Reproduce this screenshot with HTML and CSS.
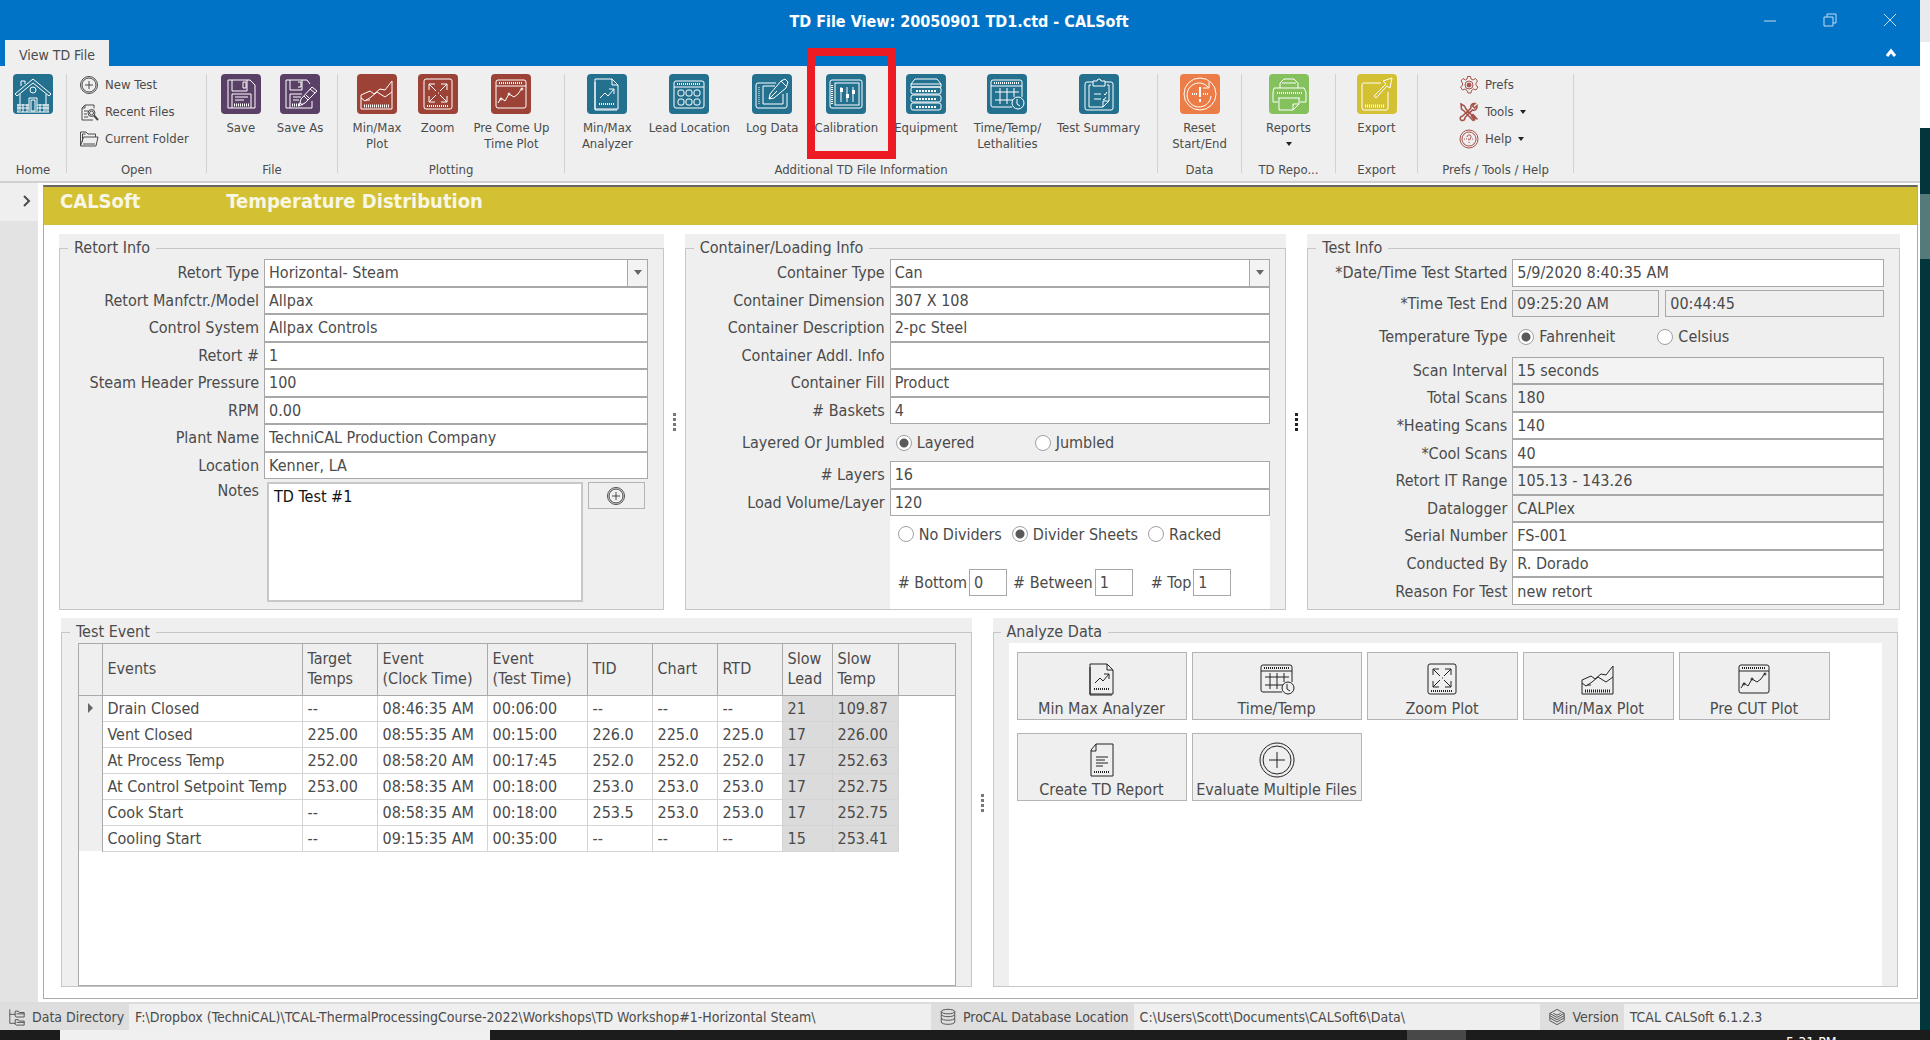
FILE: index.html
```html
<!doctype html>
<html lang="en">
  <head>
    <meta charset="utf-8">
    <meta name="viewport" content="width=device-width, initial-scale=1">
    <title>TD File View: 20050901 TD1.ctd - CALSoft</title>
    <link rel="stylesheet" href="styles.css">
  </head>
  <body>
    <!-- icon sprite, 40x40 grid -->
    <svg class="sprite" aria-hidden="true">
      <symbol id="i-home" viewBox="0 0 40 40"><path d="M2 20L20 5l18 15-2 2L20 9 4 22zM8 12V7h4v3M7 20v17M33 20v17M16 37V24h8v13M18 26h4v11h-4z"/><circle cx="20" cy="16" r="3"/><path d="M4 31h12M24 31h12M4 34h12M24 34h12M4 38h32M5 30v8M10 30v8M14 30v8M27 30v8M31 30v8M35 30v8"/></symbol>
      <symbol id="i-save" viewBox="0 0 40 40"><path d="M7 6h22l5 5v23H7zM11 6v11h15V6M22 8h3v6h-3zM11 34V20h19v14M14 23h13M14 26h9"/><path stroke-dasharray="1 1" stroke-width="3" d="M13 31h15"/></symbol>
      <symbol id="i-saveas" viewBox="0 0 40 40"><path d="M27 6H6v28h26V27M27 6l3 4M10 6v10h12V6M18 8h3v5h-3M10 34V20h12M13 23h8M13 26h6M32 13l5 4-12 12-6 3 2-7zM30 15l5 4M24 22l4 4M26 21l3 3M20 29l3 2"/><path stroke-dasharray="1 1" stroke-width="3" d="M12 31h8"/></symbol>
      <symbol id="i-area" viewBox="0 0 40 40"><path d="M4 21v14h31V7l-7 9-5-1-6 5-4-3zM4 24l4 3 6-4 6-5 8 5 7-5M9 26h4"/><path stroke-dasharray="1 1" stroke-width="3" d="M7 32h26"/></symbol>
      <symbol id="i-zoom" viewBox="0 0 40 40"><rect x="6" y="5" width="28" height="30" rx="2"/><path d="M11 16v-6h6M11 10l7 7M23 10h6v6M29 10l-7 7M11 22v6h6M11 28l7-7M29 22v6h-6M29 28l-7-7M20 19h1"/><path stroke-dasharray="1 1" stroke-width="2" d="M9 32h22"/></symbol>
      <symbol id="i-line" viewBox="0 0 40 40"><rect x="5" y="6" width="30" height="28" rx="2"/><path d="M5 12h30M7 29l3-5 4 3 4-7 5 3 4-3 4-6"/><circle cx="10" cy="25" r="1"/><circle cx="18" cy="20" r="1"/><circle cx="31" cy="15" r="1"/><path stroke-dasharray="1 1" stroke-width="2" d="M8 9h24"/></symbol>
      <symbol id="i-analyzer" viewBox="0 0 40 40"><path d="M10 5h15l6 6v24H8V5zM25 5v6h6M8 8v28h22M13 24l5-5 3 3 6-7M22 15h5v5"/><path stroke-dasharray="1 1" stroke-width="2" d="M12 30h16"/></symbol>
      <symbol id="i-grid" viewBox="0 0 40 40"><rect x="5" y="7" width="30" height="27" rx="2"/><path d="M5 13h30"/><path stroke-dasharray="1 1" stroke-width="2" d="M8 10h24"/><rect x="9" y="16" width="6" height="6" rx="2"/><rect x="17" y="16" width="6" height="6" rx="2"/><rect x="25" y="16" width="6" height="6" rx="2"/><rect x="9" y="25" width="6" height="6" rx="2"/><rect x="17" y="25" width="6" height="6" rx="2"/><rect x="25" y="25" width="6" height="6" rx="2"/></symbol>
      <symbol id="i-log" viewBox="0 0 40 40"><path d="M24 9H6a2 2 0 0 0-2 2v21a2 2 0 0 0 2 2h27a2 2 0 0 0 2-2V19M23 12H11v18h20V20M33 5l3 3-2 6-12 10-5 1 1-5 11-13zM29 7l5 5M17 25l8-8"/><path stroke-dasharray="1 1" d="M7 13v17"/></symbol>
      <symbol id="i-sliders" viewBox="0 0 40 40"><rect x="4" y="6" width="32" height="28" rx="2"/><rect x="9" y="9" width="24" height="22"/><path d="M15 13v15M21 13v15M27 13v15"/><path stroke-width="4" d="M14 16h3M20 22h3M26 18h3"/><path stroke-dasharray="1 1" stroke-width="2" d="M6 11v19"/></symbol>
      <symbol id="i-equip" viewBox="0 0 40 40"><path d="M9 5h22l4 5v3H5v-3zM5 10h30"/><rect x="5" y="13" width="30" height="7" rx="2"/><rect x="5" y="21" width="30" height="7" rx="2"/><rect x="5" y="29" width="30" height="7" rx="2"/><path stroke-dasharray="2 1" stroke-width="2" d="M10 17h21M10 25h21M10 33h21"/></symbol>
      <symbol id="i-time" viewBox="0 0 40 40"><path d="M35 23V8a2 2 0 0 0-2-2H6a2 2 0 0 0-2 2v23a2 2 0 0 0 2 2h19M4 12h31M8 18h24M8 26h18M13 14v16M20 14v16M27 14v9"/><circle cx="31" cy="29" r="6"/><path d="M30 25v5l3 2"/><path stroke-dasharray="1 1" stroke-width="2" d="M7 9h25"/></symbol>
      <symbol id="i-clip" viewBox="0 0 40 40"><path d="M14 8H8a2 2 0 0 0-2 2v24a2 2 0 0 0 2 2h24a2 2 0 0 0 2-2V10a2 2 0 0 0-2-2h-6M14 7h4a2 2 0 0 1 4 0h4v5H14zM12 11H10v22h14l6-6V11h-2M24 33v-6h6M15 20h7M15 25h7M25 20l1 1 2-3M24 25l1 1 2-3"/></symbol>
      <symbol id="i-reset" viewBox="0 0 40 40"><circle cx="20" cy="20" r="16"/><path d="M28 13a12 12 0 1 0 3 9M29 8v6h-6"/><path stroke-width="2" d="M20 13v10M20 25v3"/><path stroke-dasharray="1 1" stroke-width="2" d="M12 20h6M23 20h6"/></symbol>
      <symbol id="i-print" viewBox="0 0 40 40"><path d="M11 14V9l4-4h10l4 4v5M5 14h30l2 4v10h-6M9 28H4V18l1-4M9 24h22M10 24v12h14l6-6v-6M24 36v-6h6M13 9h14"/><path stroke-dasharray="1 1" stroke-width="2" d="M8 19h25"/></symbol>
      <symbol id="i-export" viewBox="0 0 40 40"><path d="M24 9H7a2 2 0 0 0-2 2v23a2 2 0 0 0 2 2h22a2 2 0 0 0 2-2V18M17 22L29 10l-3-3 9-3-2 10-3-2-11 12z"/><path stroke-dasharray="1 1" stroke-width="3" d="M8 32h20"/></symbol>
      <symbol id="i-plus" viewBox="0 0 40 40"><circle cx="20" cy="20" r="17"/><circle cx="20" cy="20" r="14"/><path d="M20 12v16M12 20h16"/></symbol>
      <symbol id="i-report" viewBox="0 0 40 40"><path d="M14 4h17v32H9V10zM14 4v7H9M14 17h12M14 20h9M14 23h12M14 26h7"/><path stroke-dasharray="1 1" stroke-width="2" d="M12 32h16"/></symbol>
      <symbol id="i-recent" viewBox="0 0 40 40"><path d="M12 6h18v7M12 6v6H6v24h22M6 12l6-6M10 18h8M10 24h6M10 30h8"/><circle cx="25" cy="22" r="7"/><circle cx="25" cy="22" r="4"/><path stroke-width="4" d="M30 27l8 9"/></symbol>
      <symbol id="i-folder" viewBox="0 0 40 40"><path d="M3 34V6h11l4 4h15v6M3 34l6-18h29l-4 18zM7 26V10h6M8 30h24"/></symbol>
      <symbol id="i-gear" viewBox="0 0 40 40"><path d="M17 3h6l1 5 4 2 5-3 4 5-3 4v5l4 3-4 6-5-2-4 3-1 5h-6l-2-5-4-3-5 2-4-6 4-3v-5l-3-4 4-5 5 3 3-2z"/><circle cx="20" cy="20" r="8"/><circle cx="20" cy="20" r="4" fill="currentColor"/></symbol>
      <symbol id="i-tools" viewBox="0 0 40 40"><path stroke-width="3" d="M4 4l7 4 3 6 18 19-4 4L10 18l-5-4zM36 7l-5 5-4-4 5-5c-6-1-10 4-8 9L7 28c-6 1-6 9 0 9 4 0 5-4 5-6l15-15c5 2 10-2 9-9zM27 24l10 11M24 27l8 10"/></symbol>
      <symbol id="i-help" viewBox="0 0 40 40"><circle cx="20" cy="20" r="18"/><circle cx="20" cy="20" r="14"/><path d="M16 16c0-6 9-5 8 0 0 3-4 3-4 7M20 26v2"/><path stroke-dasharray="2 2" d="M10 20h20"/></symbol>
      <symbol id="i-tree" viewBox="0 0 40 40"><path d="M4 3v31h12M4 14h12M16 7h7l2 3h11v10H18l-2-2zM16 26h7l2 3h11v9H18l-2-2zM19 13h17M19 32h17"/></symbol>
      <symbol id="i-db" viewBox="0 0 40 40"><ellipse cx="20" cy="8" rx="15" ry="5"/><path d="M5 8v6c0 7 30 7 30 0V8M5 15v7c0 7 30 7 30 0v-7M5 23v8c0 7 30 7 30 0v-8"/></symbol>
      <symbol id="i-layers" viewBox="0 0 40 40"><path d="M20 3l16 9v16l-16 9-16-9V12zM4 12l16 9 16-9M4 17l16 9 16-9M4 22l16 9 16-9M12 12l8 4 8-4"/></symbol>
    </svg>

    <div class="desktop">
      <div class="window">
        <header class="titlebar">
          <h1>TD File View: 20050901 TD1.ctd - CALSoft</h1>
          <div class="window-buttons">
            <button aria-label="Minimize"><svg viewBox="0 0 14 14"><path d="M1 8h12"/></svg></button>
            <button aria-label="Restore"><svg viewBox="0 0 14 14"><path d="M1 4h9v9H1zM4 4V1h9v9h-3"/></svg></button>
            <button aria-label="Close"><svg viewBox="0 0 14 14"><path d="M1 1l12 12M13 1L1 13"/></svg></button>
          </div>
        </header>
        <div class="tabs">
          <button class="tab">View TD File</button>
          <button class="collapse" aria-label="Collapse ribbon"><svg viewBox="0 0 14 14"><path d="M3 10l4-5 4 5"/></svg></button>
        </div>

        <nav class="ribbon">
          <section class="rgroup rgroup-home">
            <div class="ritems"><button class="big blue" aria-label="Home"><svg><use href="#i-home"/></svg></button></div>
            <h2>Home</h2>
          </section>
          <section class="rgroup rgroup-open">
            <div class="rlist">
              <button><svg><use href="#i-plus"/></svg>New Test</button>
              <button><svg><use href="#i-recent"/></svg>Recent Files</button>
              <button><svg><use href="#i-folder"/></svg>Current Folder</button>
            </div>
            <h2>Open</h2>
          </section>
          <section class="rgroup rgroup-file">
            <div class="ritems">
              <button class="big purple"><svg><use href="#i-save"/></svg>Save</button>
              <button class="big purple"><svg><use href="#i-saveas"/></svg>Save As</button>
            </div>
            <h2>File</h2>
          </section>
          <section class="rgroup rgroup-plot">
            <div class="ritems">
              <button class="big red"><svg><use href="#i-area"/></svg>Min/Max<br>Plot</button>
              <button class="big red"><svg><use href="#i-zoom"/></svg>Zoom</button>
              <button class="big red"><svg><use href="#i-line"/></svg>Pre Come Up<br>Time Plot</button>
            </div>
            <h2>Plotting</h2>
          </section>
          <section class="rgroup rgroup-info">
            <div class="ritems">
              <button class="big blue"><svg><use href="#i-analyzer"/></svg>Min/Max<br>Analyzer</button>
              <button class="big blue"><svg><use href="#i-grid"/></svg>Lead Location</button>
              <button class="big blue"><svg><use href="#i-log"/></svg>Log Data</button>
              <button class="big blue highlighted"><svg><use href="#i-sliders"/></svg>Calibration</button>
              <button class="big blue"><svg><use href="#i-equip"/></svg>Equipment</button>
              <button class="big blue"><svg><use href="#i-time"/></svg>Time/Temp/<br>Lethalities</button>
              <button class="big blue"><svg><use href="#i-clip"/></svg>Test Summary</button>
            </div>
            <h2>Additional TD File Information</h2>
          </section>
          <section class="rgroup rgroup-data">
            <div class="ritems"><button class="big orange"><svg><use href="#i-reset"/></svg>Reset<br>Start/End</button></div>
            <h2>Data</h2>
          </section>
          <section class="rgroup rgroup-reports">
            <div class="ritems"><button class="big green"><svg><use href="#i-print"/></svg>Reports<i class="caret"></i></button></div>
            <h2>TD Repo...</h2>
          </section>
          <section class="rgroup rgroup-export">
            <div class="ritems"><button class="big yellow"><svg><use href="#i-export"/></svg>Export</button></div>
            <h2>Export</h2>
          </section>
          <section class="rgroup rgroup-prefs">
            <div class="rlist maroon">
              <button><svg><use href="#i-gear"/></svg>Prefs</button>
              <button><svg><use href="#i-tools"/></svg>Tools<i class="caret"></i></button>
              <button><svg><use href="#i-help"/></svg>Help<i class="caret"></i></button>
            </div>
            <h2>Prefs / Tools / Help</h2>
          </section>
        </nav>

        <div class="workspace">
          <aside class="sidebar">
            <button aria-label="Expand panel"><svg viewBox="0 0 14 14"><path d="M4 2l5 5-5 5"/></svg></button>
          </aside>
          <main class="page">
            <div class="banner"><span>CALSoft</span><span>Temperature Distribution</span></div>
            <div class="panels">
              <div class="panel-row">
                <div class="group retort">
                  <fieldset>
                    <legend>Retort Info</legend>
                    <div class="row"><label for="retort-type">Retort Type</label><span class="select"><select id="retort-type"><option>Horizontal- Steam</option></select></span></div>
                    <div class="row"><label for="retort-model">Retort Manfctr./Model</label><input id="retort-model" value="Allpax"></div>
                    <div class="row"><label for="control-system">Control System</label><input id="control-system" value="Allpax Controls"></div>
                    <div class="row"><label for="retort-no">Retort #</label><input id="retort-no" value="1"></div>
                    <div class="row"><label for="pressure">Steam Header Pressure</label><input id="pressure" value="100"></div>
                    <div class="row"><label for="rpm">RPM</label><input id="rpm" value="0.00"></div>
                    <div class="row"><label for="plant">Plant Name</label><input id="plant" value="TechniCAL Production Company"></div>
                    <div class="row"><label for="location">Location</label><input id="location" value="Kenner, LA"></div>
                    <div class="row notes"><label for="notes">Notes</label><textarea id="notes">TD Test #1</textarea><button aria-label="Add note"><svg><use href="#i-plus"/></svg></button></div>
                  </fieldset>
                </div>
                <div class="splitter"></div>
                <div class="group container">
                  <fieldset>
                    <legend>Container/Loading Info</legend>
                    <div class="row"><label for="ctype">Container Type</label><span class="select"><select id="ctype"><option>Can</option></select></span></div>
                    <div class="row"><label for="cdim">Container Dimension</label><input id="cdim" value="307 X 108"></div>
                    <div class="row"><label for="cdesc">Container Description</label><input id="cdesc" value="2-pc Steel"></div>
                    <div class="row"><label for="cinfo">Container Addl. Info</label><input id="cinfo" value=""></div>
                    <div class="row"><label for="cfill">Container Fill</label><input id="cfill" value="Product"></div>
                    <div class="row"><label for="baskets"># Baskets</label><input id="baskets" value="4"></div>
                    <div class="row radios">
                      <span class="label">Layered Or Jumbled</span>
                      <label class="first"><input type="radio" name="layering" checked>Layered</label>
                      <label><input type="radio" name="layering">Jumbled</label>
                    </div>
                    <div class="row"><label for="layers"># Layers</label><input id="layers" value="16"></div>
                    <div class="row"><label for="volume">Load Volume/Layer</label><input id="volume" value="120"></div>
                    <div class="dividers">
                      <div class="divider-types">
                        <label><input type="radio" name="dividers">No Dividers</label>
                        <label><input type="radio" name="dividers" checked>Divider Sheets</label>
                        <label><input type="radio" name="dividers">Racked</label>
                      </div>
                      <div class="divider-counts">
                        <label for="bottom"># Bottom</label><input id="bottom" value="0">
                        <label for="between"># Between</label><input id="between" value="1">
                        <label for="top" class="top"># Top</label><input id="top" value="1">
                      </div>
                    </div>
                  </fieldset>
                </div>
                <div class="splitter dark"></div>
                <div class="group test">
                  <fieldset>
                    <legend>Test Info</legend>
                    <div class="row"><label for="started">*Date/Time Test Started</label><input id="started" value="5/9/2020 8:40:35 AM"></div>
                    <div class="row test-end"><label for="ended">*Time Test End</label><input id="ended" value="09:25:20 AM" readonly><input aria-label="Duration" value="00:44:45" readonly></div>
                    <div class="row radios">
                      <span class="label">Temperature Type</span>
                      <label class="first"><input type="radio" name="temp" checked>Fahrenheit</label>
                      <label><input type="radio" name="temp">Celsius</label>
                    </div>
                    <div class="row"><label for="interval">Scan Interval</label><input id="interval" value="15 seconds" readonly></div>
                    <div class="row"><label for="scans">Total Scans</label><input id="scans" value="180" readonly></div>
                    <div class="row"><label for="heating">*Heating Scans</label><input id="heating" value="140"></div>
                    <div class="row"><label for="cool">*Cool Scans</label><input id="cool" value="40"></div>
                    <div class="row"><label for="range">Retort IT Range</label><input id="range" value="105.13 - 143.26" readonly></div>
                    <div class="row"><label for="logger">Datalogger</label><input id="logger" value="CALPlex" readonly></div>
                    <div class="row"><label for="serial">Serial Number</label><input id="serial" value="FS-001"></div>
                    <div class="row"><label for="by">Conducted By</label><input id="by" value="R. Dorado"></div>
                    <div class="row"><label for="reason">Reason For Test</label><input id="reason" value="new retort"></div>
                  </fieldset>
                </div>
              </div>

              <div class="panel-row lower">
                <div class="group events">
                  <fieldset>
                    <legend>Test Event</legend>
                    <div class="grid-box">
                      <table>
                        <colgroup><col class="c-mark"><col class="c-event"><col class="c-target"><col class="c-clock"><col class="c-test"><col class="c-val"><col class="c-val"><col class="c-val"><col class="c-lead"><col class="c-temp"><col></colgroup>
                        <thead>
                          <tr><th></th><th>Events</th><th>Target<br>Temps</th><th>Event<br>(Clock Time)</th><th>Event<br>(Test Time)</th><th>TID</th><th>Chart</th><th>RTD</th><th>Slow<br>Lead</th><th>Slow<br>Temp</th><th></th></tr>
                        </thead>
                        <tbody>
                          <tr class="current"><td></td><td>Drain Closed</td><td>--</td><td>08:46:35 AM</td><td>00:06:00</td><td>--</td><td>--</td><td>--</td><td>21</td><td>109.87</td><td></td></tr>
                          <tr><td></td><td>Vent Closed</td><td>225.00</td><td>08:55:35 AM</td><td>00:15:00</td><td>226.0</td><td>225.0</td><td>225.0</td><td>17</td><td>226.00</td><td></td></tr>
                          <tr><td></td><td>At Process Temp</td><td>252.00</td><td>08:58:20 AM</td><td>00:17:45</td><td>252.0</td><td>252.0</td><td>252.0</td><td>17</td><td>252.63</td><td></td></tr>
                          <tr><td></td><td>At Control Setpoint Temp</td><td>253.00</td><td>08:58:35 AM</td><td>00:18:00</td><td>253.0</td><td>253.0</td><td>253.0</td><td>17</td><td>252.75</td><td></td></tr>
                          <tr><td></td><td>Cook Start</td><td>--</td><td>08:58:35 AM</td><td>00:18:00</td><td>253.5</td><td>253.0</td><td>253.0</td><td>17</td><td>252.75</td><td></td></tr>
                          <tr><td></td><td>Cooling Start</td><td>--</td><td>09:15:35 AM</td><td>00:35:00</td><td>--</td><td>--</td><td>--</td><td>15</td><td>253.41</td><td></td></tr>
                        </tbody>
                      </table>
                    </div>
                  </fieldset>
                </div>
                <div class="splitter"></div>
                <div class="group analyze">
                  <fieldset>
                    <legend>Analyze Data</legend>
                    <div class="actions">
                      <div>
                        <button class="wide"><svg><use href="#i-analyzer"/></svg>Min Max Analyzer</button>
                        <button class="wide"><svg><use href="#i-time"/></svg>Time/Temp</button>
                        <button><svg><use href="#i-zoom"/></svg>Zoom Plot</button>
                        <button><svg><use href="#i-area"/></svg>Min/Max Plot</button>
                        <button><svg><use href="#i-line"/></svg>Pre CUT Plot</button>
                      </div>
                      <div>
                        <button class="wide"><svg><use href="#i-report"/></svg>Create TD Report</button>
                        <button class="wide"><svg><use href="#i-plus"/></svg>Evaluate Multiple Files</button>
                      </div>
                    </div>
                  </fieldset>
                </div>
              </div>
            </div>
          </main>
        </div>

        <footer class="statusbar">
          <span class="key"><svg><use href="#i-tree"/></svg>Data Directory</span>
          <span class="value path">F:\Dropbox (TechniCAL)\TCAL-ThermalProcessingCourse-2022\Workshops\TD Workshop#1-Horizontal Steam\</span>
          <span class="key"><svg><use href="#i-db"/></svg>ProCAL Database Location</span>
          <span class="value data">C:\Users\Scott\Documents\CALSoft6\Data\</span>
          <span class="key"><svg><use href="#i-layers"/></svg>Version</span>
          <span class="value version">TCAL CALSoft 6.1.2.3</span>
        </footer>
      </div>
      <div class="wallpaper"></div>
    </div>
    <div class="taskbar">
      <div class="task-search"></div>
      <div class="task-active"></div>
      <span class="clock">5:31 PM</span>
    </div>
  </body>
</html>
```

FILE: styles.css
```css
*, *::before, *::after {
  box-sizing: border-box;
}
body {
  margin: 0;
  height: 100vh;
  display: flex;
  flex-direction: column;
  overflow: hidden;
  font-family: "DejaVu Sans Condensed", Tahoma, "Noto Sans", sans-serif;
  font-size: 16px;
  color: #4b4b4b;
  background: #fff;
}
button, input, select, textarea {
  font: inherit;
  color: inherit;
}
button {
  background: none;
  border: none;
  padding: 0;
}
svg {
  fill: none;
  stroke: currentColor;
}
.sprite {
  display: none;
}
.desktop {
  flex: 1;
  min-height: 0;
  display: flex;
}
.window {
  flex: 1;
  min-width: 0;
  display: flex;
  flex-direction: column;
  background: #fff;
}
.wallpaper {
  width: 10px;
  background: linear-gradient(#e9e9ee 42px, #fff 42px, #fff 128px, #02363c 128px, #02363c 194px, #557a7a 194px, #557a7a 259px, #02363c 259px);
}

/* title bar and tabs */
.titlebar {
  display: flex;
  align-items: center;
  height: 40px;
  padding: 2px 0 0 178px;
  background: #0173c7;
  color: #fff;
}
.titlebar h1 {
  flex: 1;
  margin: 0;
  text-align: center;
  font-size: 16px;
}
.window-buttons {
  display: flex;
}
.window-buttons button {
  width: 60px;
  height: 38px;
  color: #c3dcf0;
}
.window-buttons svg {
  width: 14px;
  height: 14px;
}
.tabs {
  display: flex;
  justify-content: space-between;
  height: 26px;
  padding: 0 22px 0 5px;
  background: #0173c7;
}
.tab {
  width: 104px;
  padding-top: 3px;
  background: #efefef;
  font-size: 14px;
}
.collapse svg {
  width: 14px;
  height: 14px;
  margin-top: 3px;
  color: #fff;
  stroke-width: 3;
}

/* ribbon */
.ribbon {
  display: flex;
  height: 117px;
  padding: 8px 0;
  background: #efefef;
  border-bottom: 2px solid #d0d0d0;
  font-size: 13px;
}
.rgroup {
  display: flex;
  flex-direction: column;
  justify-content: space-between;
  border-right: 1px solid #d2d2d2;
}
.rgroup h2 {
  margin: 0 0 -7px;
  font-size: 13px;
  font-weight: normal;
  line-height: 20px;
  text-align: center;
  white-space: nowrap;
}
.rgroup-home { width: 67px; }
.rgroup-open { width: 140px; }
.rgroup-file { width: 131px; }
.rgroup-plot { width: 227px; }
.rgroup-info { width: 593px; }
.rgroup-data { width: 84px; }
.rgroup-reports { width: 94px; }
.rgroup-export { width: 82px; }
.rgroup-prefs { width: 156px; }
.ritems {
  display: flex;
  justify-content: center;
  align-items: flex-start;
}
.big {
  position: relative;
  display: block;
  padding: 0 8px;
  line-height: 16px;
  white-space: nowrap;
}
.big svg {
  display: block;
  width: 40px;
  height: 40px;
  margin: 0 auto 6px;
  border-radius: 4px;
  color: #fff;
}
.blue svg { background: #23708f; }
.purple svg { background: #5a4066; }
.red svg { background: #9d4237; }
.orange svg { background: #ed7d47; }
.green svg { background: #84c15c; }
.yellow svg { background: #d3c133; }
.highlighted::after {
  content: "";
  position: absolute;
  top: -26px;
  left: 0;
  width: 89px;
  height: 111px;
  border: 8px solid #ed1c24;
  z-index: 1;
}
.caret {
  display: inline-block;
  border: 3px solid transparent;
  border-top: 4px solid #222;
  border-bottom: 0;
}
.big .caret {
  display: block;
  width: 6px;
  margin: 6px auto 0;
}
.rlist {
  display: flex;
  flex-direction: column;
  padding: 0 0 0 12px;
}
.rlist button {
  display: flex;
  align-items: center;
  gap: 6px;
  height: 27px;
  margin-top: -3px;
  margin-bottom: 3px;
  white-space: nowrap;
}
.rlist svg {
  width: 20px;
  height: 20px;
  stroke-width: 2;
}
.maroon {
  padding-left: 41px;
}
.maroon svg {
  color: #a5524b;
}

/* workspace */
.workspace {
  flex: 1;
  min-height: 0;
  display: flex;
  padding: 2px 2px 3px 0;
}
.sidebar {
  width: 38px;
  margin: -2px 5px -3px 0;
  background: linear-gradient(#efefef 38px, #e3e3e3 38px);
}
.sidebar button {
  display: block;
  width: 38px;
  height: 36px;
  padding-left: 16px;
}
.sidebar svg {
  display: block;
  margin: 0 auto;
  width: 14px;
  height: 14px;
  stroke-width: 2;
}
.page {
  flex: 1;
  min-width: 0;
  display: flex;
  flex-direction: column;
  border: 1px solid #aaa;
  border-top: 2px solid #666;
}
.banner {
  display: flex;
  gap: 86px;
  height: 38px;
  padding-left: 16px;
  line-height: 28px;
  background: #d3c133;
  color: #f8f6e4;
  font-size: 20px;
  font-weight: bold;
}
.panels {
  flex: 1;
  min-height: 0;
  display: grid;
  grid-template-rows: 376fr 369fr;
  gap: 8px;
  padding: 9px 17px 11px 15px;
}
.panel-row {
  display: flex;
  min-height: 0;
}
.lower {
  padding: 0 2px;
}
.splitter {
  display: flex;
  align-items: center;
  justify-content: center;
  width: 21px;
}
.splitter::after {
  content: "";
  width: 3px;
  height: 18px;
  background: repeating-linear-gradient(#777 0, #777 3px, transparent 3px, transparent 5px);
}
.splitter.dark::after {
  background: repeating-linear-gradient(#222 0, #222 3px, transparent 3px, transparent 5px);
}
.group {
  display: flex;
  min-width: 0;
  padding-top: 3px;
  background: #efefef;
}
.retort { flex: 605; }
.container { flex: 602; }
.test { flex: 593; }
.events { flex: 911; }
.analyze { flex: 906; }
fieldset {
  flex: 1;
  min-width: 0;
  display: flex;
  flex-direction: column;
  margin: 0;
  padding: 0 15px 0 0;
  border: 1px solid #c6c6c6;
}
legend {
  margin-left: 8px;
  padding: 0 6px;
  line-height: 22px;
}

/* form rows */
.row {
  flex: 1;
  min-height: 0;
  display: flex;
  align-items: center;
}
.row > label:first-child, .row > .label {
  width: 204px;
  padding-right: 5px;
  text-align: right;
  white-space: nowrap;
}
input, select {
  min-width: 0;
  height: 100%;
  padding: 0 4px;
  border: 1px solid #a8a8a8;
  border-radius: 0;
  background: #fff;
}
.row > input, .select {
  flex: 1;
}
input:read-only {
  background: #f3f3f3;
}
.select {
  position: relative;
  height: 100%;
}
.select select {
  width: 100%;
  appearance: none;
}
.select::before {
  content: "";
  position: absolute;
  top: 1px;
  right: 1px;
  bottom: 1px;
  width: 20px;
  background: #f3f3f3;
  border-left: 1px solid #a8a8a8;
  pointer-events: none;
}
.select::after {
  content: "";
  position: absolute;
  top: 11px;
  right: 6px;
  border: 4px solid transparent;
  border-top: 5px solid #666;
  border-bottom: 0;
  pointer-events: none;
}
.notes {
  flex: none;
  align-items: flex-start;
  gap: 5px;
  height: 130px;
  padding: 3px 3px 7px 0;
}
.notes label {
  line-height: 18px;
}
.notes textarea {
  flex: 1;
  height: 120px;
  margin-left: -2px;
  padding: 3px 5px;
  border: 2px solid #c8c8c8;
  resize: none;
  color: #111;
}
.notes button {
  width: 57px;
  height: 27px;
  border: 1px solid #b4b4b4;
}
.notes svg {
  display: block;
  width: 20px;
  height: 20px;
  margin: 0 auto;
  stroke-width: 2;
}
.radios {
  flex: none;
  height: 37px;
}
.radios label, .divider-types label {
  display: flex;
  align-items: center;
  gap: 5px;
  white-space: nowrap;
}
.radios .first {
  width: 139px;
  margin-left: 6px;
}
input[type="radio"] {
  appearance: none;
  flex: none;
  width: 16px;
  height: 16px;
  margin: 0;
  padding: 0;
  border: 1px solid #a0a0a0;
  border-radius: 50%;
  background: #fff;
}
input[type="radio"]:checked {
  background: radial-gradient(#5a5a5a 4px, #fff 5px);
}
.dividers {
  height: 93px;
  margin-left: 204px;
  padding: 8px 0 0 8px;
  background: #fff;
}
.divider-types {
  display: flex;
  gap: 10px;
  height: 20px;
}
.divider-counts {
  display: flex;
  align-items: center;
  height: 27px;
  margin-top: 25px;
  white-space: nowrap;
}
.divider-counts input {
  width: 38px;
  margin: 0 6px 0 2px;
}
.divider-counts .top {
  margin-left: 12px;
}
.test fieldset {
  padding-bottom: 4px;
}
.test .radios {
  height: 40px;
}
.test-end {
  gap: 6px;
  flex: none;
  height: 30px;
  padding-top: 3px;
}
.test-end label {
  margin-right: -6px;
}
.row.test-end > input {
  flex: 145;
  background: #efefef;
}
.row.test-end > input:last-child {
  flex: 221;
}

/* events table */
.lower fieldset {
  padding: 0 15px 0 16px;
}
.lower legend {
  margin-left: -8px;
}
.grid-box {
  flex: 1;
  border: 1px solid #aaa;
  background: #fff;
}
table {
  width: 100%;
  table-layout: fixed;
  border-collapse: collapse;
}
th, td {
  padding: 0 5px;
  text-align: left;
  font-weight: normal;
  white-space: nowrap;
}
th {
  height: 51px;
  line-height: 20px;
  background: #efefef;
  border-right: 1px solid #aaa;
  border-bottom: 1px solid #aaa;
}
th:last-child {
  border-right: 0;
}
td {
  height: 26px;
  border-right: 1px solid #d4d4d4;
  border-bottom: 1px solid #d4d4d4;
}
td:first-child {
  background: #efefef;
  border-right-color: #aaa;
  border-bottom: 0;
}
td:last-child {
  border: 0;
}
td:nth-child(9), td:nth-child(10) {
  background: #dbdbdb;
}
.current td:first-child::after {
  content: "";
  display: block;
  width: 5px;
  margin-left: 4px;
  border: 5px solid transparent;
  border-left: 5px solid #666;
  border-right: 0;
}
.c-mark { width: 23px; }
.c-event { width: 200px; }
.c-target { width: 75px; }
.c-clock { width: 110px; }
.c-test { width: 100px; }
.c-val { width: 65px; }
.c-lead { width: 50px; }
.c-temp { width: 66px; }

/* analyze buttons */
.analyze fieldset {
  padding-left: 15px;
}
.actions {
  flex: 1;
  display: flex;
  flex-direction: column;
  gap: 13px;
  padding: 9px 8px;
  background: #fff;
}
.actions div {
  display: flex;
  gap: 5px;
}
.actions button {
  width: 151px;
  height: 68px;
  border: 1px solid #b4b4b4;
  background: #efefef;
  line-height: 20px;
  white-space: nowrap;
}
.actions .wide {
  width: 170px;
}
.actions svg {
  display: block;
  width: 40px;
  height: 40px;
  margin: 5px auto 0;
  color: #222;
}

/* status bar and task bar */
.statusbar {
  display: flex;
  height: 28px;
  border-top: 2px solid #dcdcdc;
  background: #efefef;
  font-size: 14px;
  line-height: 26px;
  white-space: nowrap;
}
.key {
  display: flex;
  align-items: center;
  gap: 6px;
  padding: 0 5px 0 8px;
  background: #dedede;
}
.key svg {
  width: 18px;
  height: 18px;
  stroke-width: 2;
}
.value {
  min-width: 0;
  padding-left: 6px;
  overflow: hidden;
}
.path { flex: 806; }
.data { flex: 406; }
.version { flex: 294; }
.taskbar {
  display: flex;
  height: 10px;
  padding-left: 60px;
  overflow: hidden;
  background: #1c1c1c;
  color: #fff;
}
.task-search {
  width: 430px;
  background: #f0f0f0;
}
.task-active {
  width: 59px;
  margin-left: 917px;
  background: #484848;
}
.clock {
  margin-left: 320px;
  padding-top: 4px;
  font-size: 14px;
}
```
